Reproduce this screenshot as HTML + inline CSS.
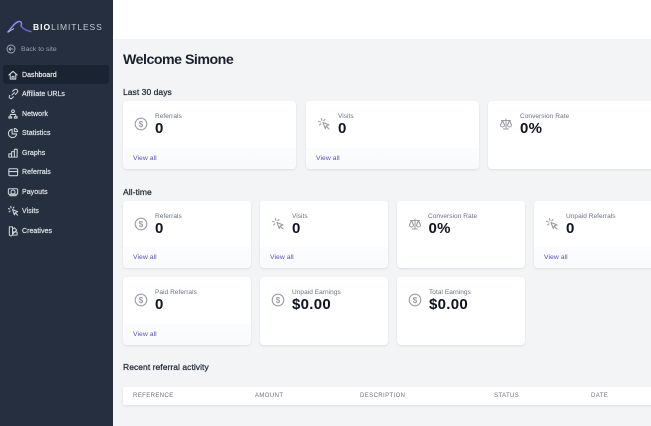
<!DOCTYPE html>
<html><head><meta charset="utf-8"><style>
*{box-sizing:border-box}
html,body{margin:0;padding:0}
body{width:651px;height:426px;overflow:hidden;position:relative;background:#f3f4f6;font-family:"Liberation Sans",sans-serif;color:#111827}
#blur{position:absolute;inset:0;filter:blur(.35px)}
.abs,.card,.nav,.t{position:absolute}
#side{position:absolute;left:0;top:0;width:113px;height:426px;background:#252f3f}
#top{position:absolute;left:113px;top:0;width:538px;height:39px;background:#fff}
.nav{left:22px;font-size:7px;color:#dfe3e8;line-height:10px;white-space:nowrap;letter-spacing:.05px;-webkit-text-stroke:.2px #dfe3e8;margin-top:2px}
.ni{position:absolute;left:7px;width:12px;height:12px;fill:none;stroke:#cfd4db;stroke-width:1.15;stroke-linecap:round;stroke-linejoin:round;margin-top:.5px}
.card{background:#fff;border-radius:4px;box-shadow:0 1px 2px rgba(0,0,0,.09);overflow:hidden}
.foot{position:absolute;left:0;right:0;bottom:0;height:21px;background:linear-gradient(#fbfcfd,#f8fafc);border-radius:0 0 4px 4px}
.foot span{position:absolute;left:10px;top:5.500px;font-size:6.800px;line-height:10px;color:#5b4fc0;letter-spacing:.05px}
.lab{position:absolute;left:32px;top:11px;font-size:6.500px;line-height:10px;color:#6b7280;white-space:nowrap;letter-spacing:.05px}
.val{position:absolute;left:32px;top:20px;font-size:15px;line-height:16px;font-weight:bold;color:#0f1420;white-space:nowrap;letter-spacing:.3px}
.ic{position:absolute;left:11px;top:16px;width:14px;height:14px;fill:none;stroke:#9a9ea6;stroke-width:1.1;stroke-linecap:round;stroke-linejoin:round}
.ic text{font:bold 8px "Liberation Sans",sans-serif;fill:#9a9ea6;stroke:none}
.h{position:absolute;left:123px;font-size:8.500px;line-height:12px;color:#1f2937;white-space:nowrap;letter-spacing:.05px;-webkit-text-stroke:.25px #1f2937}
.th{position:absolute;top:392px;font-size:6px;line-height:8px;color:#6b7280;letter-spacing:.4px;white-space:nowrap}
</style></head><body><div id="blur">
<div id="side"></div><div id="top"></div>

<svg class="abs" style="left:7px;top:20px;width:25px;height:13px" viewBox="0 0 25 13" fill="none"><path d="M1 12C4 8.500 8 2 12 1.500c2.500-.3 3 2 2 4.500" stroke="#8f86ee" stroke-width="1.500" stroke-linecap="round"/><path d="M14 6C16 8.500 19.500 11 24 11.500" stroke="#6a5fd0" stroke-width="1.500" stroke-linecap="round"/><path d="M1 12 7 8.500" stroke="#c9c6f5" stroke-width="1"/></svg>
<div class="abs" style="left:33px;top:22px;font-size:8.500px;line-height:11px;color:#e5e7eb;white-space:nowrap;letter-spacing:.9px"><b style="color:#fff;letter-spacing:1px">BIO</b><span style="font-weight:normal;color:#c5cad3">LIMITLESS</span></div>

<svg class="ni" style="top:42px;left:5px;stroke:#a3aab5;stroke-width:.9" viewBox="0 0 12 12"><circle cx="6" cy="6" r="4"/><path d="M8 6H4M5.500 4.500 4 6l1.500 1.500"/></svg>
<div class="nav" style="top:42.500px;left:21px;font-size:6.800px;color:#9aa2ae;-webkit-text-stroke:0">Back to site</div>

<div class="abs" style="left:3px;top:65px;width:106px;height:19px;background:#1a2331;border-radius:3px"></div>

<svg class="ni" style="top:68px" viewBox="0 0 13 13"><path d="M2 6.500 6.500 2.500 11 6.500M3.500 5.500V11h6V5.500M5.500 11V8h2v3"/></svg>
<div class="nav" style="top:68.500px;color:#f3f4f6">Dashboard</div>

<svg class="ni" style="top:87px" viewBox="0 0 13 13"><path d="M5.500 7.500 8 5M3 8 2.500 9a2 2 0 0 0 2.500 2.500L7 9.500M6 3.500 8 2a2 2 0 0 1 3 3L9 7"/></svg>
<div class="nav" style="top:88px">Affiliate URLs</div>

<svg class="ni" style="top:107px" viewBox="0 0 13 13"><circle cx="6.500" cy="3.500" r="1.500"/><path d="M4 7h5M2 11V9.500h3V11H2ZM8 11V9.500h3V11H8ZM3.500 9.500V7.500M9.500 9.500V7.500"/></svg>
<div class="nav" style="top:107.500px">Network</div>

<svg class="ni" style="top:126.500px" viewBox="0 0 13 13"><path d="M5.500 2.500a4.500 4.500 0 1 0 5 5h-5v-5Z"/><path d="M8 1.500a4 4 0 0 1 3.500 3.500H8V1.500Z"/></svg>
<div class="nav" style="top:127px">Statistics</div>

<svg class="ni" style="top:146px" viewBox="0 0 13 13"><path d="M2 11V7.500h3V11H2ZM5 11V5h3v6H5ZM8 11V2.500h3V11H8Z"/></svg>
<div class="nav" style="top:146.500px">Graphs</div>

<svg class="ni" style="top:165.500px" viewBox="0 0 13 13"><rect x="2" y="3" width="9.500" height="7.500" rx="1"/><path d="M2 6h9.500"/></svg>
<div class="nav" style="top:166px">Referrals</div>

<svg class="ni" style="top:185px" viewBox="0 0 13 13"><rect x="1.500" y="3" width="10" height="6" rx="1"/><circle cx="6.500" cy="6.500" r="2.200"/><path d="M3 10.500h7"/></svg>
<div class="nav" style="top:185.500px">Payouts</div>

<svg class="ni" style="top:204.500px" viewBox="0 0 13 13"><path d="m6 5 5.500 2.200-2.500 1-1 2.500L6 5ZM9.500 9l2 2M4 1.500l.4 1.500M1.500 4l1.500.4M7.500 2.300 6.500 3.500M2.300 7.500 3.500 6.500"/></svg>
<div class="nav" style="top:205px">Visits</div>

<svg class="ni" style="top:224px" viewBox="0 0 13 13"><path d="M2.500 2h3.500v8a1.700 1.700 0 0 1-3.500 0V2ZM6 4.500l2-1.500 2.500 2.500L6 10"/><rect x="6" y="7.500" width="5" height="3.500" rx=".7"/></svg>
<div class="nav" style="top:224.500px">Creatives</div>

<div class="abs" style="left:123px;top:50.500px;font-size:14.200px;line-height:18px;font-weight:bold;color:#1a202c;white-space:nowrap;letter-spacing:-.5px">Welcome Simone</div>
<div class="h" style="top:86px">Last 30 days</div>

<div class="card" style="left:123px;top:101px;width:173px;height:68px"><svg class="ic" viewBox="0 0 14 14"><circle cx="7" cy="7" r="5.800"/><text x="7" y="9.800" text-anchor="middle">$</text></svg><div class="lab">Referrals</div><div class="val">0</div><div class="foot"><span>View all</span></div></div>

<div class="card" style="left:306px;top:101px;width:173px;height:68px"><svg class="ic" viewBox="0 0 14 14"><path d="m6 5.500 6 2.400-2.700 1-1 2.700L6 5.500ZM9.500 9.500l2.500 2.500M4.500 1.500l.4 1.800M1.500 4.500l1.800.4M8 2.500 6.800 3.800M2.500 8l1.300-1.200"/></svg><div class="lab">Visits</div><div class="val">0</div><div class="foot"><span>View all</span></div></div>

<div class="card" style="left:488px;top:101px;width:180px;height:68px"><svg class="ic" viewBox="0 0 14 14"><path d="M7 2v9.500M4.500 12h5M2.500 3.500h9M3.500 3.500 1.500 8a2 2 0 0 0 4 0L3.500 3.500ZM10.500 3.500 8.500 8a2 2 0 0 0 4 0l-2-4.500Z"/></svg><div class="lab">Conversion Rate</div><div class="val">0%</div></div>

<div class="h" style="top:185.500px">All-time</div>

<div class="card" style="left:123px;top:201px;width:128px;height:67px"><svg class="ic" viewBox="0 0 14 14"><circle cx="7" cy="7" r="5.800"/><text x="7" y="9.800" text-anchor="middle">$</text></svg><div class="lab">Referrals</div><div class="val">0</div><div class="foot"><span>View all</span></div></div>

<div class="card" style="left:260px;top:201px;width:128px;height:67px"><svg class="ic" viewBox="0 0 14 14"><path d="m6 5.500 6 2.400-2.700 1-1 2.700L6 5.500ZM9.500 9.500l2.500 2.500M4.500 1.500l.4 1.800M1.500 4.500l1.800.4M8 2.500 6.800 3.800M2.500 8l1.300-1.200"/></svg><div class="lab">Visits</div><div class="val">0</div><div class="foot"><span>View all</span></div></div>

<div class="card" style="left:397px;top:201px;width:128px;height:67px"><svg class="ic" viewBox="0 0 14 14"><path d="M7 2v9.500M4.500 12h5M2.500 3.500h9M3.500 3.500 1.500 8a2 2 0 0 0 4 0L3.500 3.500ZM10.500 3.500 8.500 8a2 2 0 0 0 4 0l-2-4.500Z"/></svg><div class="lab" style="left:31px">Conversion Rate</div><div class="val" style="left:31.500px">0%</div></div>

<div class="card" style="left:534px;top:201px;width:128px;height:67px"><svg class="ic" viewBox="0 0 14 14"><path d="m6 5.500 6 2.400-2.700 1-1 2.700L6 5.500ZM9.500 9.500l2.500 2.500M4.500 1.500l.4 1.800M1.500 4.500l1.800.4M8 2.500 6.800 3.800M2.500 8l1.300-1.200"/></svg><div class="lab">Unpaid Referrals</div><div class="val">0</div><div class="foot"><span>View all</span></div></div>

<div class="card" style="left:123px;top:277px;width:128px;height:68px"><svg class="ic" viewBox="0 0 14 14"><circle cx="7" cy="7" r="5.800"/><text x="7" y="9.800" text-anchor="middle">$</text></svg><div class="lab">Paid Referrals</div><div class="val">0</div><div class="foot"><span>View all</span></div></div>

<div class="card" style="left:260px;top:277px;width:128px;height:68px"><svg class="ic" viewBox="0 0 14 14"><circle cx="7" cy="7" r="5.800"/><text x="7" y="9.800" text-anchor="middle">$</text></svg><div class="lab">Unpaid Earnings</div><div class="val">$0.00</div></div>

<div class="card" style="left:397px;top:277px;width:128px;height:68px"><svg class="ic" viewBox="0 0 14 14"><circle cx="7" cy="7" r="5.800"/><text x="7" y="9.800" text-anchor="middle">$</text></svg><div class="lab">Total Earnings</div><div class="val">$0.00</div></div>

<div class="h" style="top:361px">Recent referral activity</div>

<div class="card" style="left:123px;top:387px;width:540px;height:18px;border-radius:2px"></div>
<div class="th" style="left:133px">REFERENCE</div>
<div class="th" style="left:255px">AMOUNT</div>
<div class="th" style="left:360px">DESCRIPTION</div>
<div class="th" style="left:494px">STATUS</div>
<div class="th" style="left:591px">DATE</div>
</div></body></html>
